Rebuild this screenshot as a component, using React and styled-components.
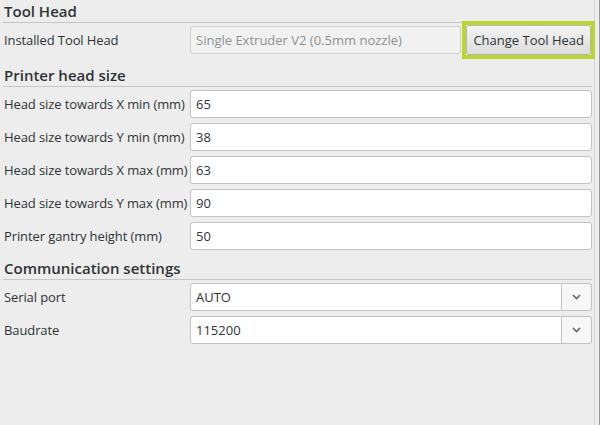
import React from 'react';
import styled, { createGlobalStyle } from 'styled-components';

const GlobalStyle = createGlobalStyle`
  html,
  body {
    margin: 0;
    padding: 0;
    background: #ededed;
  }
`;

const StyledPage = styled.div`
  display: flex;
  width: 600px;
  height: 425px;
  overflow: hidden;
  background-color: #ededed;
  font-family: 'Open Sans', 'DejaVu Sans', sans-serif;
  color: #2e3436;
`;

const StyledContent = styled.div`
  flex: 1;
  padding: 0 2px 0 4px;
  border-right: 1px solid #d6d6d6;
`;

const StyledEdge = styled.div`
  width: 5px;
  border-right: 1px solid #9a9a9a;
  box-sizing: border-box;
`;

const StyledTitle = styled.h2`
  margin: 0 0 0 -1px;
  padding: ${({ gap }) => gap}px 0 0 1px;
  font-size: 15px;
  font-weight: 600;
  line-height: 21px;
  border-bottom: 1px solid #c6c6c6;
`;

const StyledRow = styled.div`
  display: grid;
  grid-template-columns: 186px 1fr;
  grid-template-rows: 33px;
  align-items: center;
`;

const StyledLabel = styled.label`
  font-size: 13px;
  letter-spacing: -0.1px;
  white-space: nowrap;
`;

const StyledControls = styled.div`
  display: flex;
  align-items: center;
  gap: 1px;
  height: 28px;
`;

const StyledField = styled.div`
  flex: 1;
  display: flex;
  align-items: center;
  height: 28px;
  box-sizing: border-box;
  padding-left: 5px;
  border: 1px solid ${({ disabled }) => (disabled ? '#cfcfcf' : '#c2c2c2')};
  border-radius: 3px;
  background-color: ${({ disabled }) => (disabled ? '#f1f1f1' : '#fff')};
  color: ${({ disabled }) => (disabled ? '#8e9192' : '#2e3436')};
  font-size: 13px;
`;

const StyledFocusRing = styled.div`
  display: flex;
  margin: -5px -3px -5px 0;
  border: 4px solid #b9d531;
`;

const StyledButton = styled.button`
  height: 30px;
  padding: 0 6px;
  border: 1px solid #b6b6b6;
  border-radius: 3px;
  background: linear-gradient(#f4f4f4, #dcdcdc);
  color: #2e3436;
  font-family: inherit;
  font-size: 13px;
  outline: none;
`;

const StyledSelect = styled.div`
  flex: 1;
  display: flex;
  height: 28px;
`;

const StyledSelectValue = styled(StyledField)`
  border-radius: 3px 0 0 3px;
`;

const StyledArrow = styled.div`
  display: flex;
  align-items: center;
  justify-content: center;
  width: 29px;
  border: 1px solid #c2c2c2;
  border-left: none;
  border-radius: 0 3px 3px 0;
  background-color: #f7f7f7;
  color: #666;
`;

const Chevron = () => (
  <svg width="9" height="6" viewBox="0 0 9 6">
    <path d="M1 1l3.5 3.5L8 1" fill="none" stroke="currentColor" strokeWidth="1.6" />
  </svg>
);

const headFields = [
  ['Head size towards X min (mm)', '65'],
  ['Head size towards Y min (mm)', '38'],
  ['Head size towards X max (mm)', '63'],
  ['Head size towards Y max (mm)', '90'],
  ['Printer gantry height (mm)', '50']
];

const commFields = [
  ['Serial port', 'AUTO'],
  ['Baudrate', '115200']
];

const App = () => (
  <>
    <GlobalStyle />
    <StyledPage>
      <StyledContent>
        <StyledTitle gap={1}>Tool Head</StyledTitle>
        <StyledRow>
          <StyledLabel>Installed Tool Head</StyledLabel>
          <StyledControls>
            <StyledField disabled>Single Extruder V2 (0.5mm nozzle)</StyledField>
            <StyledFocusRing>
              <StyledButton type="button">Change Tool Head</StyledButton>
            </StyledFocusRing>
          </StyledControls>
        </StyledRow>

        <StyledTitle gap={9}>Printer head size</StyledTitle>
        {headFields.map(([label, value]) => (
          <StyledRow key={label}>
            <StyledLabel>{label}</StyledLabel>
            <StyledField>{value}</StyledField>
          </StyledRow>
        ))}

        <StyledTitle gap={6}>Communication settings</StyledTitle>
        {commFields.map(([label, value]) => (
          <StyledRow key={label}>
            <StyledLabel>{label}</StyledLabel>
            <StyledSelect>
              <StyledSelectValue>{value}</StyledSelectValue>
              <StyledArrow>
                <Chevron />
              </StyledArrow>
            </StyledSelect>
          </StyledRow>
        ))}
      </StyledContent>
      <StyledEdge />
    </StyledPage>
  </>
);

export default App;
